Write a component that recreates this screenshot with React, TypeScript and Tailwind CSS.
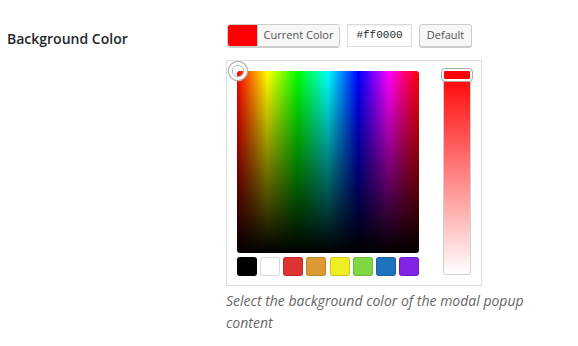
import React from "react";

const swatches = ["#000000", "#ffffff", "#dd3333", "#dd9933", "#eeee22", "#81d742", "#1e73be", "#8224e3"];

export default function App() {
  return (
    <div
      className="w-[578px] h-[346px] bg-white flex pl-[7px] pt-[24px]"
      style={{ fontFamily: '"Open Sans", "Liberation Sans", sans-serif' }}
    >
      <div className="w-[219px] shrink-0 pt-[5px]">
        <div className="text-[14px] leading-[20px] font-semibold text-[#23282d]">Background Color</div>
      </div>
      <div className="flex flex-col">
        <div className="flex items-start gap-[7px] pl-[1px]">
          <div className="flex w-[113px] h-[23px] rounded-[3px] overflow-hidden border border-[#cccccc] shadow-[0_1px_0_#cccccc]">
            <span className="w-[30px] shrink-0 bg-[#ff0000] -ml-[1px] -my-[1px] rounded-l-[3px]" />
            <span className="flex-1 flex items-center justify-center bg-[#f7f7f7] border-l border-[#cccccc] text-[11px] text-[#555555]">
              Current Color
            </span>
          </div>
          <div className="w-[65px] h-[23px] border border-[#dddddd] bg-white flex items-center justify-center text-[11px] text-[#23282d] shadow-[inset_0_1px_2px_rgba(0,0,0,0.07)]"
            style={{ fontFamily: '"Liberation Mono", "DejaVu Sans Mono", monospace' }}>
            #ff0000
          </div>
          <div className="w-[53px] h-[23px] rounded-[3px] border border-[#cccccc] bg-[#f7f7f7] shadow-[0_1px_0_#cccccc] flex items-center justify-center text-[11px] text-[#555555]">
            Default
          </div>
        </div>
        <div className="mt-[13px] w-[256px] h-[226px] border border-[#dfdfdf] flex pt-[10px] pl-[10px]">
          <div className="flex flex-col w-[182px]">
            <div className="relative w-[182px] h-[182px]">
              <div
                className="absolute inset-0 rounded-[3px]"
                style={{
                  background:
                    "linear-gradient(to bottom, rgba(0,0,0,0), #000), linear-gradient(to right, #ff0000, #ffff00, #00ff00, #00ffff, #0000ff, #ff00ff, #ff0000)",
                }}
              />
              <svg className="absolute -left-[10px] -top-[11px]" width="22" height="22" viewBox="0 0 22 22">
                <circle cx="11" cy="11" r="9.5" fill="none" stroke="#b0b0b0" strokeWidth="1.5" />
                <circle cx="11" cy="11" r="7.5" fill="none" stroke="#ffffff" strokeWidth="3" />
                <circle cx="11" cy="11" r="5.6" fill="none" stroke="#b8b8b8" strokeWidth="1" />
              </svg>
            </div>
            <div className="flex justify-between mt-[4px]">
              {swatches.map((c) => (
                <div
                  key={c}
                  className="w-[20px] h-[19px] rounded-[3px] shadow-[inset_0_0_0_1px_rgba(0,0,0,0.15)]"
                  style={{ backgroundColor: c }}
                />
              ))}
            </div>
          </div>
          <div className="relative ml-[24px] -mt-[1px] w-[28px] h-[205px]">
            <div
              className="absolute inset-0 rounded-[3px] border border-[#cfcfcf]"
              style={{ background: "linear-gradient(to bottom, #ff0000, #ffffff)" }}
            />
            <div className="absolute -left-[2px] -right-[2px] -top-[2px] h-[14px] rounded-[4px] border border-[#aaaaaa] bg-white p-[2px]">
              <div className="w-full h-full bg-[#ff0000] rounded-[1px]" />
            </div>
          </div>
        </div>
        <div className="mt-[4px] w-[340px] text-[14px] leading-[22px] italic text-[#666666]">
          Select the background color of the modal popup content
        </div>
      </div>
    </div>
  );
}
